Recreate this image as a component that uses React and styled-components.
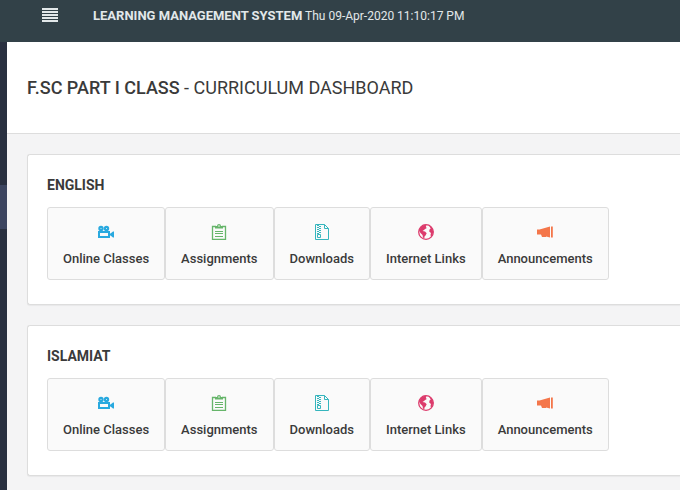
import React from 'react';
import styled, { createGlobalStyle } from 'styled-components';

const colors = {
  navbar: '#324148',
  sidebar: '#293040',
  sidebarActive: '#3c4560',
  page: '#f4f4f5',
  surface: '#ffffff',
  button: '#fafafa',
  border: '#dddddd',
  text: '#3a3a3a',
};

const subjects = ['ENGLISH', 'ISLAMIAT'];

const GlobalStyle = createGlobalStyle`
  * {
    box-sizing: border-box;
  }

  body {
    margin: 0;
    font-family: Roboto, 'Liberation Sans', sans-serif;
    font-size: 13px;
    line-height: 20px;
    color: ${colors.text};
    background: ${colors.page};
  }
`;

const Page = styled.div`
  display: flex;
  flex-direction: column;
  min-height: 100vh;
  overflow: hidden;
`;

const Navbar = styled.header`
  display: flex;
  align-items: flex-start;
  gap: 34px;
  height: 42px;
  padding: 6px 0 0 41px;
  color: #e2e8ea;
  background: ${colors.navbar};
`;

const MenuButton = styled.button`
  display: flex;
  padding: 1px 0 0;
  border: 0;
  color: inherit;
  background: none;
  cursor: pointer;
`;

const NavbarText = styled.div`
  font-size: 12px;
  white-space: nowrap;

  strong {
    font-size: 13px;
    font-weight: 700;
  }
`;

const Body = styled.div`
  display: flex;
  flex: 1;
`;

const Sidebar = styled.nav`
  flex: 0 0 7px;
  padding-top: 143px;
  background: ${colors.sidebar};
`;

const SidebarLink = styled.a`
  display: block;
  height: 44px;
  background: ${colors.sidebarActive};
`;

const Main = styled.main`
  flex: 1;
  min-width: 0;
`;

const PageHeader = styled.div`
  padding: 34px 20px 33px;
  background: ${colors.surface};
  border-bottom: 1px solid ${colors.border};
`;

const PageTitle = styled.h1`
  margin: 0;
  font-size: 18px;
  line-height: 24px;
  font-weight: 400;
  white-space: nowrap;

  strong {
    font-weight: 500;
  }
`;

const Content = styled.div`
  display: flex;
  flex-direction: column;
  gap: 20px;
  padding: 20px 0 0 20px;
`;

const Card = styled.section`
  padding: 20px 19px 24px;
  background: ${colors.surface};
  border: 1px solid ${colors.border};
  border-right: 0;
  border-radius: 3px 0 0 3px;
  box-shadow: 0 1px 1px rgba(0, 0, 0, 0.05);
`;

const CardTitle = styled.h2`
  margin: 0 0 12px;
  font-size: 14px;
  line-height: 20px;
  font-weight: 700;
`;

const ButtonRow = styled.div`
  display: flex;
`;

const TileButton = styled.button`
  display: flex;
  flex-direction: column;
  align-items: center;
  gap: 9px;
  padding: 16px 15px 10px;
  font: inherit;
  font-weight: 500;
  color: ${colors.text};
  white-space: nowrap;
  background: ${colors.button};
  border: 1px solid ${colors.border};
  border-radius: 3px;
  cursor: pointer;

  svg {
    color: ${(props) => props.$accent};
  }
`;

const Icon = ({ children }) => (
  <svg width="16" height="16" viewBox="0 0 16 16" fill="none" aria-hidden="true">
    {children}
  </svg>
);

const CameraIcon = () => (
  <Icon>
    <circle cx="3" cy="4.500" r="1.600" stroke="currentColor" strokeWidth="2.200" />
    <circle cx="8.500" cy="4.500" r="1.600" stroke="currentColor" strokeWidth="2.200" />
    <path stroke="currentColor" strokeWidth="2" d="M1 8h10v5H1Z" />
    <path fill="currentColor" d="M11 9.500h1.500L15 7.500h1v6h-1l-2.500-2H11Z" />
  </Icon>
);

const ClipboardIcon = () => (
  <Icon>
    <path stroke="currentColor" strokeWidth="1.300" d="M5 2.500H1.500v13h13v-13H11" />
    <path
      fill="currentColor"
      fillRule="evenodd"
      d="M4 4.500V2h2a2 2 0 0 1 4 0h2v2.500ZM8 1.200a.8.8 0 1 0 0 1.600.8.8 0 0 0 0-1.600Z"
    />
    <path stroke="currentColor" d="M4 7.500h8M4 9.500h8M4 12.500h8" />
  </Icon>
);

const ZipIcon = () => (
  <Icon>
    <path stroke="currentColor" d="M1.500.5h9l4 4v11h-13ZM10.500.5v4h4" />
    <path
      stroke="currentColor"
      strokeWidth="2"
      strokeDasharray="1 1"
      d="M4 1v9M6 2v8"
    />
    <path stroke="currentColor" d="M3.500 10.500h3v3h-3Z" />
  </Icon>
);

const GlobeIcon = () => (
  <Icon>
    <circle cx="8" cy="8" r="7.300" stroke="currentColor" strokeWidth="1.300" />
    <path
      fill="currentColor"
      d="M1 6.500 3 2.800 6.500.8 8.500 1.300 7.800 3l1 1-2 1.300L6 6 4.500 7l2.500.6 1.700 1.700L7.500 11.500 6.500 12.500 6.300 14.500 5 13.500 4.500 11 2.500 9ZM11 1.500l3 2.500 1.200 3.500-.7 3.500-1.500 2-.5-2L13 9l-1.800-1.500.3-2 1.200-1Z"
    />
  </Icon>
);

const BullhornIcon = () => (
  <Icon>
    <path
      fill="currentColor"
      d="M0 5.500h2.500L13 2.500v11l-4-1V13H5l-1-2.500H0ZM14 2.500h1.800v11H14Z"
    />
  </Icon>
);

const MenuIcon = () => (
  <svg width="18" height="16" viewBox="0 0 18 16" aria-hidden="true">
    <path stroke="currentColor" strokeWidth="2" d="M1 2h16M1 5h16M1 8h16M1 11h16M1 14h16" />
  </svg>
);

const tiles = [
  { label: 'Online Classes', accent: '#29a9df', icon: CameraIcon },
  { label: 'Assignments', accent: '#66b56a', icon: ClipboardIcon },
  { label: 'Downloads', accent: '#35b5bd', icon: ZipIcon },
  { label: 'Internet Links', accent: '#dc3b6c', icon: GlobeIcon },
  { label: 'Announcements', accent: '#f4764a', icon: BullhornIcon },
];

function SubjectCard({ name }) {
  return (
    <Card>
      <CardTitle>{name}</CardTitle>
      <ButtonRow>
        {tiles.map(({ label, accent, icon: TileIcon }) => (
          <TileButton key={label} type="button" $accent={accent}>
            <TileIcon />
            <span>{label}</span>
          </TileButton>
        ))}
      </ButtonRow>
    </Card>
  );
}

function App() {
  return (
    <Page>
      <GlobalStyle />
      <Navbar>
        <MenuButton type="button" aria-label="Toggle menu">
          <MenuIcon />
        </MenuButton>
        <NavbarText>
          <strong>LEARNING MANAGEMENT SYSTEM</strong> Thu 09-Apr-2020 11:10:17 PM
        </NavbarText>
      </Navbar>
      <Body>
        <Sidebar>
          <SidebarLink href="#curriculum" aria-label="Curriculum" />
        </Sidebar>
        <Main>
          <PageHeader>
            <PageTitle>
              <strong>F.SC PART I CLASS</strong> - CURRICULUM DASHBOARD
            </PageTitle>
          </PageHeader>
          <Content>
            {subjects.map((name) => (
              <SubjectCard key={name} name={name} />
            ))}
          </Content>
        </Main>
      </Body>
    </Page>
  );
}

export default App;
